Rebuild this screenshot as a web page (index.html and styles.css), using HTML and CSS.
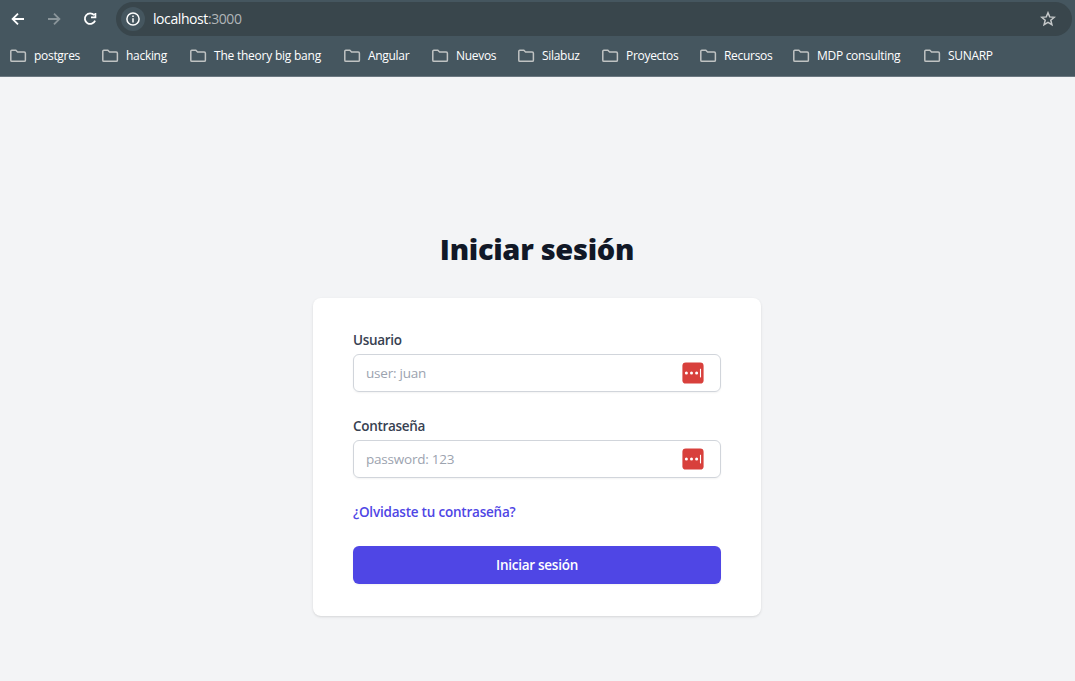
FILE: index.html
```html
<!DOCTYPE html>
<html lang="es">
<head>
<meta charset="utf-8">
<title>Iniciar sesión</title>
<link rel="stylesheet" href="styles.css">
</head>
<body>
<svg class="defs" width="0" height="0" aria-hidden="true">
  <symbol id="folder" viewBox="0 0 17 14"><path d="M.8 2.2Q.8 1.2 1.8 1.2H5.8L7.6 3H14.2Q15.4 3 15.4 4.2V11.2Q15.4 12.3 14.3 12.3H1.9Q.8 12.3 .8 11.2Z" fill="none" stroke="currentColor" stroke-width="1.5"/></symbol>
  <symbol id="vault" viewBox="0 0 22 22"><rect x=".4" y=".4" width="21.2" height="21.2" rx="3.4" fill="#d8403c"/><circle cx="4.4" cy="11" r="1.5" fill="#fff"/><circle cx="9.5" cy="11" r="1.5" fill="#fff"/><circle cx="14.6" cy="11" r="1.5" fill="#fff"/><path d="M18.5 6.8v8.6" stroke="#fff" stroke-width="1.1"/></symbol>
</svg>
<header class="chrome">
  <div class="toolbar">
    <svg class="nav" width="16" height="16" viewBox="0 0 16 16"><path d="M14 8H3M8 2.6L2.6 8L8 13.4"/></svg>
    <svg class="nav dim" width="16" height="16" viewBox="0 0 16 16"><path d="M2 8H13M8 2.6L13.4 8L8 13.4"/></svg>
    <svg class="nav" width="16" height="16" viewBox="0 0 16 16"><path d="M12.2 4.2A5.3 5.3 0 1 0 13.1 9.6M13.4 2V6.4H9"/></svg>
    <div class="address">
      <span class="info"><svg width="14" height="14" viewBox="0 0 14 14"><circle cx="7" cy="7" r="6.1" fill="none" stroke="#fff" stroke-width="1.5"/><path d="M7 6.2V10.4M7 3.5V5" stroke="#fff" stroke-width="1.5"/></svg></span>
      <span class="url">localhost<span class="port">:3000</span></span>
      <svg class="star" width="16" height="16" viewBox="0 0 16 16"><path d="M8 1.8L9.7 5.9L14.3 6.3L10.8 9.2L11.9 13.6L8 11.3L4.1 13.6L5.2 9.2L1.7 6.3L6.3 5.9Z" fill="none" stroke="#c5c8c9" stroke-width="1.5"/></svg>
    </div>
  </div>
  <nav class="bookmarks">
    <a><svg><use href="#folder"/></svg><span>postgres</span></a>
    <a><svg><use href="#folder"/></svg><span>hacking</span></a>
    <a><svg><use href="#folder"/></svg><span>The theory big bang</span></a>
    <a><svg><use href="#folder"/></svg><span>Angular</span></a>
    <a><svg><use href="#folder"/></svg><span>Nuevos</span></a>
    <a><svg><use href="#folder"/></svg><span>Silabuz</span></a>
    <a><svg><use href="#folder"/></svg><span>Proyectos</span></a>
    <a><svg><use href="#folder"/></svg><span>Recursos</span></a>
    <a><svg><use href="#folder"/></svg><span>MDP consulting</span></a>
    <a><svg><use href="#folder"/></svg><span>SUNARP</span></a>
  </nav>
</header>
<main class="page">
  <h1 class="title">Iniciar sesión</h1>
  <form class="card">
    <label class="label" for="user">Usuario</label>
    <div class="field"><input id="user" class="input" type="text" placeholder="user: juan"><svg class="vault"><use href="#vault"/></svg></div>
    <label class="label" for="pass">Contraseña</label>
    <div class="field"><input id="pass" class="input pass" type="password" placeholder="password: 123"><svg class="vault"><use href="#vault"/></svg></div>
    <a class="forgot">¿Olvidaste tu contraseña?</a>
    <button class="submit" type="button">Iniciar sesión</button>
  </form>
</main>
</body>
</html>
```
FILE: styles.css
```css
* { box-sizing: border-box; }
body { margin: 0; height: 681px; background: #f3f4f6; font-family: "Open Sans", "Noto Sans", sans-serif; overflow: hidden; }
.defs { display: block; }
.chrome { height: 77px; background: #45565f; border-bottom: 1px solid #6b7881; }
.toolbar { display: flex; align-items: center; height: 38px; padding: 0 3px 0 10px; }
.nav { flex: none; margin-right: 20px; fill: none; stroke: #fff; stroke-width: 1.8; }
.nav.dim { stroke: #8a959a; }
.nav:nth-child(3) { margin-right: 18px; }
.address { flex: 1; display: flex; align-items: center; height: 34px; padding: 0 16px 0 5px; border-radius: 17px; background: #39464c; }
.info { display: flex; align-items: center; justify-content: center; width: 24px; height: 24px; margin-right: 8px; border-radius: 50%; background: #45565f; }
.url { flex: 1; color: #fff; font-size: 14px; line-height: 20px; letter-spacing: -0.42px; }
.port { color: #b0b5b8; }
.star { flex: none; }
.bookmarks { display: grid; grid-template-columns: 92px 88px 154px 88px 86px 84px 98px 93px 131px auto; align-items: center; height: 36px; padding-left: 10px; }
.bookmarks a { display: flex; align-items: center; gap: 7px; color: #fff; font-size: 12px; line-height: 16px; font-weight: 500; letter-spacing: -0.3px; white-space: nowrap; }
.bookmarks a:nth-child(3) { letter-spacing: -0.23px; }
.bookmarks svg { width: 17px; height: 14px; color: #c0c3c3; }
.page { display: flex; flex-direction: column; align-items: center; width: 1074px; padding-top: 154px; }
.title { margin: 0 0 31px; color: #111827; font-size: 29px; line-height: 36px; font-weight: 800; letter-spacing: -0.3px; white-space: nowrap; }
.card { display: flex; flex-direction: column; width: 448px; height: 318px; padding: 32px 40px; border-radius: 8px; background: #fff; box-shadow: 0 1px 3px rgba(0,0,0,.1), 0 1px 2px -1px rgba(0,0,0,.1); }
.label { margin-bottom: 4px; color: #374151; font-size: 13.5px; line-height: 20px; font-weight: 600; letter-spacing: -0.3px; }
.field { display: flex; align-items: center; height: 38px; margin-bottom: 24px; padding: 0 16px 0 12px; border: 1px solid #d1d5db; border-radius: 6px; box-shadow: 0 1px 2px rgba(0,0,0,.05); }
.input { flex: 1; min-width: 0; padding: 0; border: 0; outline: 0; background: none; font: 13.5px/20px "Open Sans", "Noto Sans", sans-serif; letter-spacing: -0.22px; }
.input::placeholder { color: #9ca3af; }
.vault { width: 22px; height: 22px; }
.forgot { align-self: flex-start; margin-bottom: 24px; color: #4f46e5; font-size: 13.5px; line-height: 20px; font-weight: 600; letter-spacing: -0.21px; }
.submit { height: 38px; padding: 0; border: 0; border-radius: 6px; background: #4f46e5; color: #fff; font: 600 13.5px/20px "Open Sans", "Noto Sans", sans-serif; letter-spacing: -0.26px; box-shadow: 0 1px 2px rgba(0,0,0,.05); }
```
